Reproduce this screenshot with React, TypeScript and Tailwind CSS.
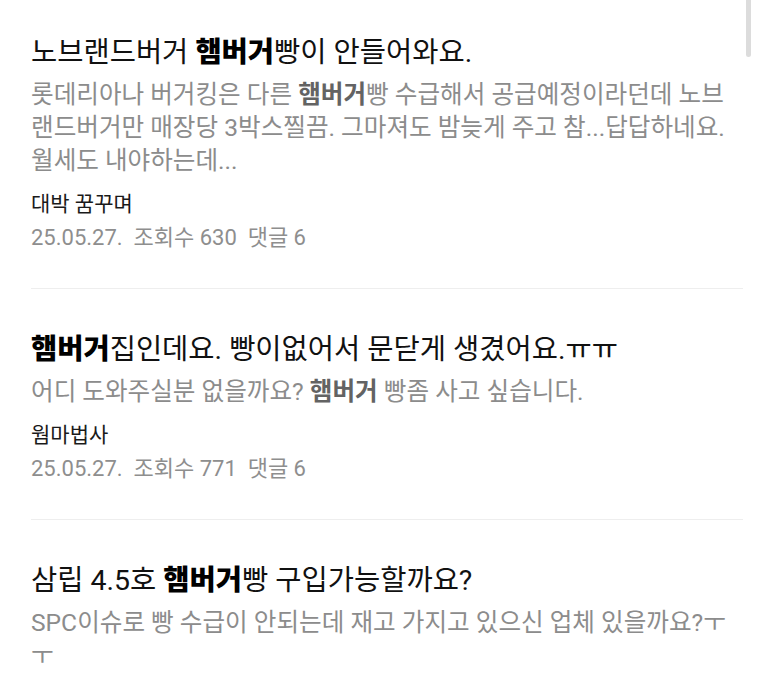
import React from "react";

const font = { fontFamily: "Roboto, 'Noto Sans CJK KR', 'Noto Sans', sans-serif" };

type Part = string | { b: string } | { br: true };

function Rich({ parts, boldClass }: { parts: Part[]; boldClass: string }) {
  return (
    <>
      {parts.map((p, i) =>
        typeof p === "string" ? (
          <span key={i}>{p}</span>
        ) : "br" in p ? (
          <br key={i} />
        ) : (
          <span key={i} className={boldClass}>
            {p.b}
          </span>
        )
      )}
    </>
  );
}

function Item({
  title,
  body,
  author,
  meta,
  first,
  last,
}: {
  title: Part[];
  body: Part[];
  author?: string;
  meta?: string;
  first?: boolean;
  last?: boolean;
}) {
  return (
    <div
      className={
        (first ? "pt-[35px] " : "pt-[43px] ") +
        (last ? "" : "pb-[36px] border-b border-[#eeeeee]")
      }
    >
      <div className="text-[28.5px] leading-[36px] text-[#111111] whitespace-nowrap">
        <Rich parts={title} boldClass="font-extrabold text-black" />
      </div>
      <div className="mt-[7px] text-[24.6px] leading-[33px] text-[#8c8c8c] whitespace-nowrap">
        <Rich parts={body} boldClass="font-bold text-[#636363]" />
      </div>
      {author && (
        <div className="mt-[13px] text-[21px] leading-[28px] text-[#1a1a1a]">{author}</div>
      )}
      {meta && (
        <div className="mt-[6px] text-[22px] leading-[28px] text-[#8e8e8e] whitespace-pre">
          {meta}
        </div>
      )}
    </div>
  );
}

export default function App() {
  return (
    <div className="relative w-[773px] h-[685px] overflow-hidden bg-white" style={font}>
      <div className="absolute left-[746px] top-0 w-[5px] h-[57px] rounded-b-full bg-[#dcdcdc]" />
      <div className="ml-[31px] w-[712px]">
        <Item
          first
          title={["노브랜드버거 ", { b: "햄버거" }, "빵이 안들어와요."]}
          body={[
            "롯데리아나 버거킹은 다른 ",
            { b: "햄버거" },
            "빵 수급해서 공급예정이라던데 노브",
            { br: true },
            "랜드버거만 매장당 3박스찔끔. 그마져도 밤늦게 주고 참...답답하네요.",
            { br: true },
            "월세도 내야하는데...",
          ]}
          author="대박 꿈꾸며"
          meta={"25.05.27.  조회수 630  댓글 6"}
        />
        <Item
          title={[{ b: "햄버거" }, "집인데요. 빵이없어서 문닫게 생겼어요.ㅠㅠ"]}
          body={["어디 도와주실분 없을까요? ", { b: "햄버거" }, " 빵좀 사고 싶습니다."]}
          author="웜마법사"
          meta={"25.05.27.  조회수 771  댓글 6"}
        />
        <Item
          last
          title={["삼립 4.5호 ", { b: "햄버거" }, "빵 구입가능할까요?"]}
          body={[
            "SPC이슈로 빵 수급이 안되는데 재고 가지고 있으신 업체 있을까요?ㅜ",
            { br: true },
            "ㅜ",
          ]}
        />
      </div>
    </div>
  );
}
